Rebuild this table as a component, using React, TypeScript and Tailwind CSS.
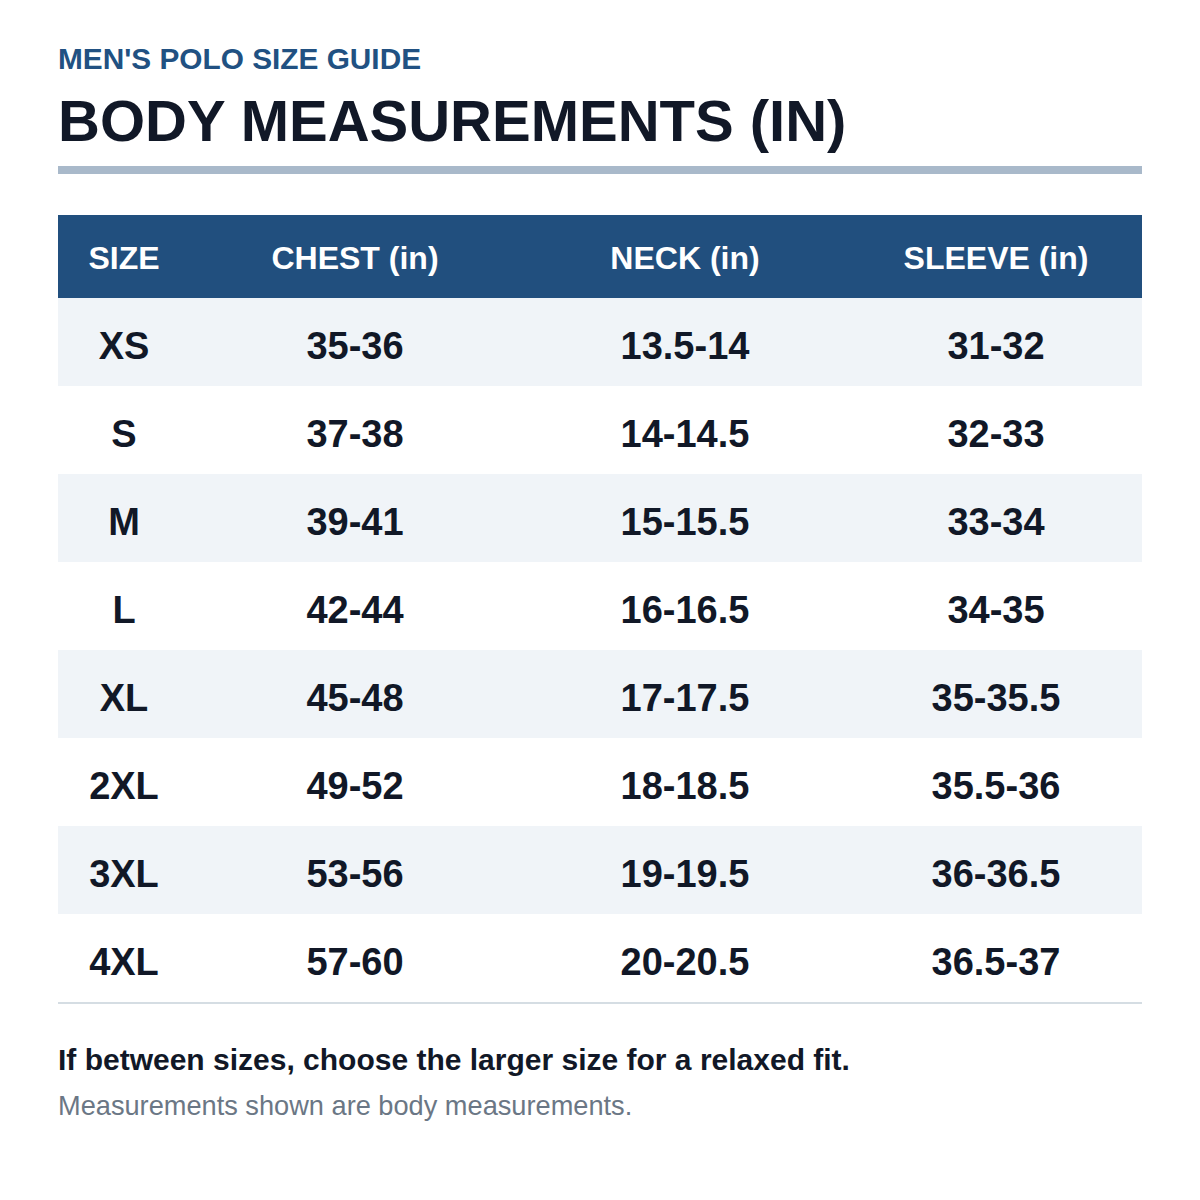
import React from "react";

const rows = [
  ["XS", "35-36", "13.5-14", "31-32"],
  ["S", "37-38", "14-14.5", "32-33"],
  ["M", "39-41", "15-15.5", "33-34"],
  ["L", "42-44", "16-16.5", "34-35"],
  ["XL", "45-48", "17-17.5", "35-35.5"],
  ["2XL", "49-52", "18-18.5", "35.5-36"],
  ["3XL", "53-56", "19-19.5", "36-36.5"],
  ["4XL", "57-60", "20-20.5", "36.5-37"],
];

export default function App() {
  return (
    <div
      className="w-[1200px] h-[1200px] bg-white px-[58px] pt-[44px]"
      style={{ fontFamily: '"Liberation Sans", Arial, sans-serif' }}
    >
      <div className="text-[29.8px] leading-[30px] font-bold text-[#215182]">MEN'S POLO SIZE GUIDE</div>
      <div className="mt-[17px] text-[58px] leading-[60px] font-bold text-[#111827]">BODY MEASUREMENTS (IN)</div>
      <div className="mt-[15px] h-[8px] bg-[#a9b9ca]" />
      <div className="mt-[41px] border-b-2 border-[#d5dde3]">
        <div className="grid grid-cols-[132px_330px_330px_1fr] h-[83px] pt-[2px] items-center bg-[#214f7e] text-white text-[32px] font-bold">
          <div className="text-center">SIZE</div>
          <div className="text-center">CHEST (in)</div>
          <div className="text-center">NECK (in)</div>
          <div className="text-center">SLEEVE (in)</div>
        </div>
        {rows.map((r, i) => (
          <div
            key={r[0]}
            className={`grid grid-cols-[132px_330px_330px_1fr] h-[88px] pt-[8px] items-center text-[38px] font-bold text-[#111827] ${i % 2 === 0 ? "bg-[#f0f4f8]" : "bg-white"}`}
          >
            {r.map((c, j) => (
              <div key={j} className="text-center">{c}</div>
            ))}
          </div>
        ))}
      </div>
      <div className="mt-[40px] text-[30px] leading-[32px] font-bold text-[#111827]">
        If between sizes, choose the larger size for a relaxed fit.
      </div>
      <div className="mt-[14px] text-[27.2px] leading-[32px] text-[#6b7785]">Measurements shown are body measurements.</div>
    </div>
  );
}
